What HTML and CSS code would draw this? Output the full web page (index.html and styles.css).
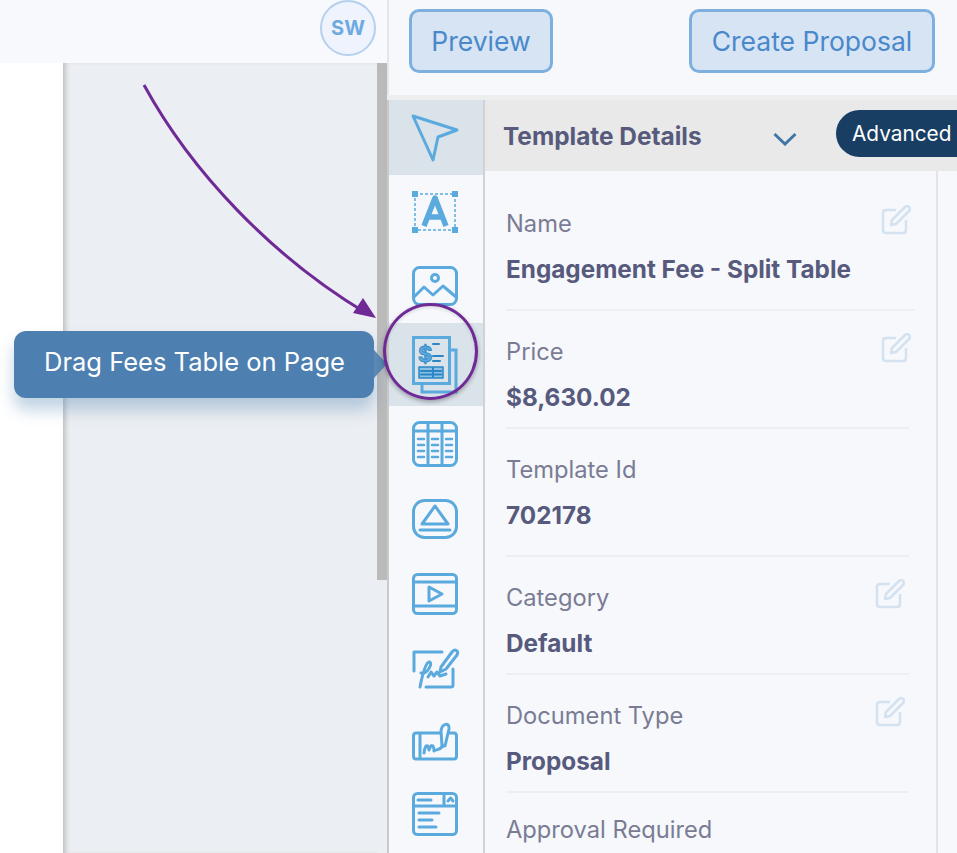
FILE: index.html
```html
<!DOCTYPE html>
<html lang="en">
<head>
  <meta charset="UTF-8" />
  <title>Template Details</title>
  <link rel="stylesheet" href="styles.css">
</head>
<body>
  <div class="editor">
    <div class="topbar">
      <div class="avatar">SW</div>
    </div>
    <div class="canvas-row">
      <div class="margin"></div>
      <div class="canvas"></div>
      <div class="scrollbar"><div class="thumb"></div></div>
    </div>
  </div>

  <div class="panel">
    <div class="actions">
      <button class="btn btn-preview">Preview</button>
      <button class="btn btn-create">Create Proposal</button>
    </div>
    <div class="panel-body">
      <nav class="rail">
        <div class="rail-item selected">
          <svg class="icon" width="48" height="48" viewBox="0 0 48 48"><path d="M2 2 L46 16 L27 23 L22 46 Z"/></svg>
        </div>
        <div class="rail-item short">
          <svg class="icon" width="46" height="42" viewBox="0 0 46 42">
            <rect x="3" y="3" width="40" height="36" class="dash"/>
            <rect x="0" y="0" width="6" height="6" class="fill"/><rect x="40" y="0" width="6" height="6" class="fill"/>
            <rect x="0" y="36" width="6" height="6" class="fill"/><rect x="40" y="36" width="6" height="6" class="fill"/>
            <path d="M12 35 L23 7 L34 35 M16 26 H30" class="thick"/>
          </svg>
        </div>
        <div class="rail-item short">
          <svg class="icon" width="46" height="40" viewBox="0 0 46 40">
            <rect x="1.5" y="1.5" width="43" height="37" rx="6"/>
            <circle cx="23" cy="12" r="3.5"/>
            <path d="M2 31 L12 21 L21 29 L31 20 L44 31"/>
          </svg>
        </div>
        <div class="rail-item active">
          <svg class="icon dark" width="46" height="58" viewBox="0 0 46 58">
            <path d="M38 14 H44 V56 H10 V48" class="sheet-back"/>
            <rect x="1.5" y="1.5" width="36" height="46" class="sheet"/>
            <text x="6" y="26" class="dollar">$</text>
            <path d="M21 8 H27 M21 20 H31 M21 25 H28"/>
            <rect x="7" y="31" width="24" height="11" class="box"/>
            <path d="M9 35 H29 M9 38.5 H29 M21 32 V41"/>
          </svg>
        </div>
        <div class="rail-item">
          <svg class="icon" width="46" height="46" viewBox="0 0 46 46">
            <rect x="1.5" y="1.5" width="43" height="43" rx="6"/>
            <path d="M2 10 H44 M16 2 V44 M30 2 V44"/>
            <path d="M6 18 H12 M20 18 H26 M34 18 H40 M6 24 H12 M20 24 H26 M34 24 H40 M6 30 H12 M20 30 H26 M34 30 H40 M6 36 H12 M20 36 H26 M34 36 H40" class="thin"/>
          </svg>
        </div>
        <div class="rail-item">
          <svg class="icon" width="46" height="40" viewBox="0 0 46 40">
            <rect x="1.5" y="1.5" width="43" height="37" rx="11"/>
            <path d="M10 25 L23 7 L36 25 Z M8 31 H38"/>
          </svg>
        </div>
        <div class="rail-item">
          <svg class="icon" width="46" height="42" viewBox="0 0 46 42">
            <rect x="1.5" y="1.5" width="43" height="39" rx="4"/>
            <path d="M2 9 H44 M2 33 H44"/>
            <path d="M17 14 L30 21 L17 28 Z"/>
          </svg>
        </div>
        <div class="rail-item sign">
          <svg class="icon" width="46" height="42" viewBox="0 0 46 42">
            <path d="M30 5 H2 V24 M41 22 V38 Q41 40 39 40 H14"/>
            <path d="M8 40 C10 30 13 16 17 15 C22 15 15 28 9 26 M16 30 L19 25 L22 29 L25 25 L28 29 L34 27"/>
            <path d="M29 20 L40 5 C43 1 47 4 45 8 L34 22 L28 25 Z"/>
          </svg>
        </div>
        <div class="rail-item">
          <svg class="icon" width="46" height="38" viewBox="0 0 46 38">
            <path d="M28 10 H4 Q1.5 10 1.5 13 V33 Q1.5 36 4 36 H42 Q44.5 36 44.5 33 V13 Q44.5 10 42 10 H37"/>
            <path d="M8 11 V35"/>
            <path d="M12 30 C13 22 16 20 17 27 C19 21 22 21 22 28 C24 26 27 28 31 23"/>
            <path d="M30 23 L29 8 C30 0 38 -1 37 6 L33 23 Z"/>
          </svg>
        </div>
        <div class="rail-item form">
          <svg class="icon" width="46" height="44" viewBox="0 0 46 44">
            <rect x="1.5" y="1.5" width="43" height="41" rx="4"/>
            <path d="M2 14 H44 M32 2 V14"/>
            <path d="M36 9 L38.5 6 L41 9 M6 8 H19 M7 21 H27 M7 28 H20 M7 35 H24"/>
          </svg>
        </div>
      </nav>

      <section class="details">
        <div class="details-head">
          <h2>Template Details</h2>
          <svg class="chevron" width="24" height="14" viewBox="0 0 24 14"><path d="M1.5 2 L12 12 L22.5 2"/></svg>
          <span class="badge">Advanced</span>
        </div>
        <div class="fields">
          <div class="field field-first">
            <div class="label">Name</div>
            <div class="value">Engagement Fee - Split Table</div>
            <svg class="edit" width="30" height="30" viewBox="0 0 30 30"><path d="M15 5 H5 Q2 5 2 8 V25 Q2 28 5 28 H22 Q25 28 25 25 V15 M11 15 L24 2 Q26 0 28 2 Q30 4 28 6 L15 19 L10 20 Z"/></svg>
          </div>
          <div class="field">
            <div class="label">Price</div>
            <div class="value">$8,630.02</div>
            <svg class="edit shift" width="30" height="30" viewBox="0 0 30 30"><path d="M15 5 H5 Q2 5 2 8 V25 Q2 28 5 28 H22 Q25 28 25 25 V15 M11 15 L24 2 Q26 0 28 2 Q30 4 28 6 L15 19 L10 20 Z"/></svg>
          </div>
          <div class="field roomy">
            <div class="label">Template Id</div>
            <div class="value">702178</div>
          </div>
          <div class="field">
            <div class="label">Category</div>
            <div class="value">Default</div>
            <svg class="edit" width="30" height="30" viewBox="0 0 30 30"><path d="M15 5 H5 Q2 5 2 8 V25 Q2 28 5 28 H22 Q25 28 25 25 V15 M11 15 L24 2 Q26 0 28 2 Q30 4 28 6 L15 19 L10 20 Z"/></svg>
          </div>
          <div class="field">
            <div class="label">Document Type</div>
            <div class="value">Proposal</div>
            <svg class="edit" width="30" height="30" viewBox="0 0 30 30"><path d="M15 5 H5 Q2 5 2 8 V25 Q2 28 5 28 H22 Q25 28 25 25 V15 M11 15 L24 2 Q26 0 28 2 Q30 4 28 6 L15 19 L10 20 Z"/></svg>
          </div>
          <div class="field last">
            <div class="label">Approval Required</div>
          </div>
        </div>
      </section>
    </div>
  </div>

  <!-- callout drawn over the page -->
  <svg class="arrow" width="260" height="260" viewBox="0 0 260 260">
    <path class="arrow-line" d="M3 4 C50 90 130 175 225 232"/>
    <path class="arrow-head" d="M235 237 L212 232 L222 217 Z"/>
  </svg>
  <div class="tooltip">Drag Fees Table on Page</div>
  <div class="ring"></div>
</body>
</html>
```

FILE: styles.css
```css
html, body {
  margin: 0;
  padding: 0;
  height: 100%;
  overflow: hidden;
}
body {
  display: flex;
  font-family: Inter, "Liberation Sans", sans-serif;
  background-color: white;
  position: relative;
}

/* left side */
.editor {
  width: 387px;
  display: flex;
  flex-direction: column;
  flex-shrink: 0;
}
.topbar {
  height: 63px;
  background-color: #f8f9fc;
  display: flex;
  justify-content: flex-end;
  align-items: center;
  padding-right: 11px;
  box-sizing: border-box;
}
.avatar {
  width: 56px;
  height: 56px;
  box-sizing: border-box;
  margin-top: -8px;
  border: 2px solid #b5d0ee;
  border-radius: 50%;
  background-color: #eef3fd;
  color: #6eaae0;
  font-weight: 700;
  font-size: 20px;
  display: flex;
  align-items: center;
  justify-content: center;
}
.canvas-row {
  flex: 1;
  display: flex;
}
.margin {
  width: 63px;
  background-color: white;
}
.canvas {
  flex: 1;
  background-color: #ebeef2;
  box-shadow: inset 5px 0 4px -2px #c4c4c4;
}
.scrollbar {
  width: 10px;
  background-color: #ebeef2;
}
.thumb {
  height: 517px;
  background-color: #bababa;
}

/* right panel */
.panel {
  flex: 1;
  height: 853px;
  display: flex;
  flex-direction: column;
  background-color: #f6f8fc;
  min-width: 0;
  overflow: hidden;
}
.actions {
  height: 95px;
  flex-shrink: 0;
  box-sizing: border-box;
  padding: 9px 22px 0 20px;
  display: flex;
  justify-content: space-between;
  align-items: flex-start;
  border-left: 2px solid #e4e6ea;
}
.btn {
  height: 64px;
  box-sizing: border-box;
  background-color: #d6e4f3;
  border: 3px solid #7db0de;
  border-radius: 10px;
  color: #4a88cc;
  font-family: inherit;
  font-size: 26.5px;
}
.btn-preview {
  width: 144px;
}
.btn-create {
  width: 246px;
}
.panel-body {
  flex: 1;
  min-height: 0;
  display: flex;
  border-top: 5px solid #eeeeef;
}

/* icon rail */
.rail {
  width: 98px;
  box-sizing: border-box;
  border-left: 2px solid #c9c9c9;
  border-right: 2px solid #d0d2d6;
  flex-shrink: 0;
}
.rail-item {
  height: 75px;
  padding-right: 2px;
  box-sizing: border-box;
  display: flex;
  align-items: center;
  justify-content: center;
}
.rail-item.short {
  height: 74px;
}
.rail-item.sign {
  height: 73px;
}
.rail-item.form {
  height: 70px;
}
.rail-item.selected,
.rail-item.active {
  background-color: #dae2ea;
}
.rail-item.active {
  height: 83px;
}
.icon {
  overflow: visible;
  fill: none;
  stroke: #5baade;
  stroke-width: 3;
  stroke-linejoin: round;
  stroke-linecap: round;
}
.icon .fill {
  fill: #5baade;
  stroke: none;
}
.icon .dash {
  stroke-width: 1.5;
  stroke-dasharray: 3 2;
  stroke-linecap: butt;
}
.icon .thick {
  stroke-width: 5.5;
  stroke-linecap: butt;
}
.icon .thin {
  stroke-width: 2.5;
}
.icon.dark {
  stroke: #2a86c4;
  stroke-width: 2;
}
.icon .sheet-back {
  stroke: #5baade;
  stroke-width: 3;
  stroke-linejoin: miter;
}
.icon .sheet {
  fill: #dae2ea;
  stroke: #5baade;
  stroke-width: 3;
  stroke-linejoin: miter;
}
.icon .box {
  fill: #8cc0e4;
  stroke: #2a86c4;
  stroke-width: 1.5;
}
.icon .dollar {
  fill: #5baade;
  stroke: #2a86c4;
  stroke-width: 0.8;
  font-size: 22px;
  font-weight: 700;
}

/* details */
.details {
  flex: 1;
  min-width: 0;
  overflow: hidden;
}
.details-head {
  height: 71px;
  background-color: #e9e9e9;
  position: relative;
  display: flex;
  align-items: center;
  padding-left: 18px;
}
.details-head h2 {
  margin: 0;
  width: 270px;
  font-size: 24.4px;
  font-weight: 700;
  color: #575a7c;
}
.chevron {
  fill: none;
  stroke: #3f76a8;
  stroke-width: 3;
  margin-top: 6px;
}
.badge {
  position: absolute;
  left: 351px;
  top: 10px;
  width: 130px;
  height: 47px;
  box-sizing: border-box;
  padding-left: 16px;
  background-color: #193e63;
  border-radius: 24px 0 0 24px;
  color: white;
  font-size: 20.8px;
  line-height: 47px;
  white-space: nowrap;
}
.fields {
  width: 453px;
  height: 682px;
  box-sizing: border-box;
  border-right: 2px solid #e4e4e8;
  padding-left: 21px;
  padding-right: 27px;
}
.field {
  position: relative;
  padding-bottom: 16px;
  border-bottom: 2px solid #eceef2;
}
.field.roomy {
  padding-bottom: 26px;
}
.field-first {
  margin-right: -6px;
  padding-top: 12px;
  padding-bottom: 26px;
}
.field.last {
  border-bottom: none;
  margin-top: -4px;
}
.label {
  padding-top: 27px;
  font-size: 23.7px;
  line-height: 28px;
  color: #7a7c94;
}
.value {
  margin-top: 17px;
  font-size: 24.3px;
  line-height: 28px;
  font-weight: 700;
  color: #575a7c;
}
.edit {
  position: absolute;
  top: 22px;
  right: 4px;
  fill: none;
  stroke: #d3e1f0;
  stroke-width: 2.5;
  stroke-linejoin: round;
}
.edit.shift {
  right: -2px;
}
.field-first .edit {
  top: 34px;
}

/* callout */
.arrow {
  position: absolute;
  left: 141px;
  top: 81px;
  fill: none;
}
.arrow-line {
  stroke: #6f2a96;
  stroke-width: 3;
}
.arrow-head {
  fill: #6f2a96;
}
.tooltip {
  position: absolute;
  left: 14px;
  top: 331px;
  width: 360px;
  height: 67px;
  box-sizing: border-box;
  padding-left: 30px;
  background-color: #4d80b0;
  border-radius: 12px;
  color: white;
  font-size: 25.5px;
  line-height: 62px;
  box-shadow: 0 12px 16px rgba(77, 128, 176, 0.35);
}
.tooltip::after {
  content: "";
  position: absolute;
  left: 360px;
  top: 19px;
  border-left: 13px solid rgba(77, 128, 176, 0.9);
  border-top: 14px solid transparent;
  border-bottom: 14px solid transparent;
}
.ring {
  position: absolute;
  left: 383px;
  top: 303px;
  width: 95px;
  height: 97px;
  box-sizing: border-box;
  border: 3.5px solid #6f2a96;
  border-radius: 50%;
  box-shadow: 0 2px 4px rgba(0, 0, 0, 0.3), inset 0 2px 3px rgba(0, 0, 0, 0.1);
}
```
